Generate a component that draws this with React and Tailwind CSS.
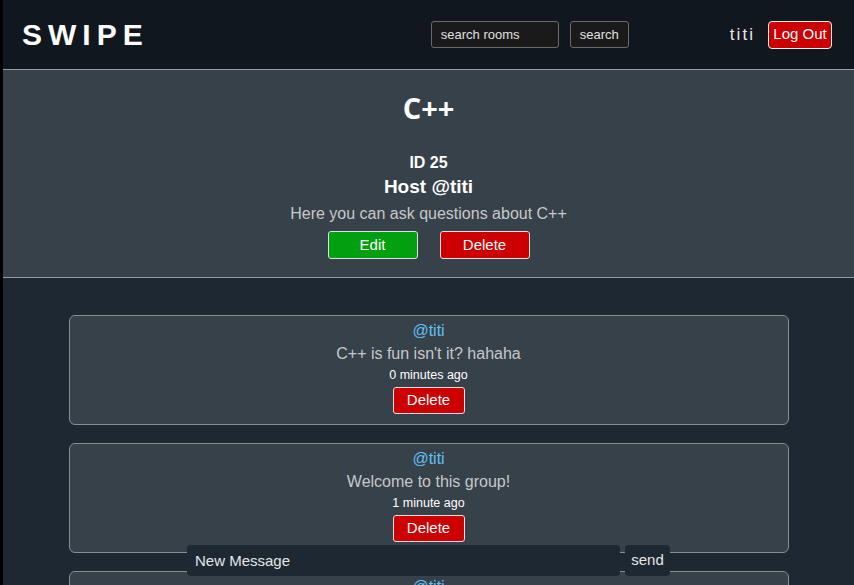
const messages = [
  { user: "titi", text: "C++ is fun isn't it? hahaha", time: "0 minutes ago" },
  { user: "titi", text: "Welcome to this group!", time: "1 minute ago" },
  { user: "titi", text: "Hello everyone", time: "2 minutes ago" },
];

const Header = () => {
  return (
    <div className="flex items-center h-[69px] pl-[19px] pr-[22px] bg-[#10171e] border-b border-[#9a9a9a] box-content">
      <div className="text-white font-bold text-[30px] tracking-[0.2em] leading-none">SWIPE</div>
      <div className="flex items-center ml-auto mr-[-1px]">
        <input
          placeholder="search rooms"
          className="w-[128px] h-[27px] px-[9px] bg-[#1a1a1a] border border-[#6a6a6a] rounded-[3px] text-[13px] text-[#e0e0e0] placeholder:text-[#e0e0e0] outline-none"
        />
        <button className="ml-[11px] w-[59px] h-[27px] bg-[#1a1a1a] border border-[#6a6a6a] rounded-[3px] text-[13px] text-[#e0e0e0]">
          search
        </button>
      </div>
      <div className="ml-[102px] text-[17px] tracking-[0.12em] text-[#e6e6e6]">titi</div>
      <button className="ml-[13px] w-[64px] h-[28px] bg-[#cc0000] border border-[#f0f0f0] rounded-[4px] text-[15px] text-white">
        Log Out
      </button>
    </div>
  );
};

const RoomInfo = () => {
  return (
    <div className="flex flex-col items-center bg-[#36414a] border-b border-[#9a9a9a] pt-[18px] pb-[18px]">
      <h1 className="text-white font-bold text-[29px] leading-[40px] font-['Open_Sans',sans-serif]">C++</h1>
      <div className="mt-[25px] text-white font-bold text-[16px] leading-[20px]">ID 25</div>
      <div className="mt-[2px] text-white font-bold text-[19px] leading-[24px]">Host @titi</div>
      <div className="mt-[4px] text-[#c8c8c8] text-[16px] leading-[22px]">Here you can ask questions about C++</div>
      <div className="flex gap-[22px] mt-[6px]">
        <button className="w-[90px] h-[28px] bg-[#00a010] border border-[#e0e0e0] rounded-[3px] text-white text-[15px]">Edit</button>
        <button className="w-[90px] h-[28px] bg-[#cc0000] border border-[#e0e0e0] rounded-[3px] text-white text-[15px]">Delete</button>
      </div>
    </div>
  );
};

const MessageCard = ({ msg }) => {
  return (
    <div className="w-[720px] h-[110px] flex flex-col items-center pt-[4px] bg-[#36414a] border border-[#8c8c8c] rounded-[6px]">
      <div className="text-[#5ec2f2] text-[16px] leading-[22px]">@{msg.user}</div>
      <div className="text-[#c8c8c8] text-[16px] leading-[23px]">{msg.text}</div>
      <div className="text-white text-[12.5px] leading-[20px]">{msg.time}</div>
      <button className="mt-[2px] w-[72px] h-[27px] bg-[#cc0000] border border-[#e0e0e0] rounded-[3px] text-white text-[15px]">
        Delete
      </button>
    </div>
  );
};

export default function App() {
  return (
    <div className="flex min-h-screen bg-black font-['Liberation_Sans',Arial,sans-serif]">
      <div className="w-[3px] shrink-0 bg-black" />
      <div className="flex-1 flex flex-col bg-[#1e2833]">
        <Header />
        <RoomInfo />
        <div className="flex flex-col items-center gap-[18px] pt-[37px] pb-[60px]">
          {messages.map((m, i) => (
            <MessageCard key={i} msg={m} />
          ))}
        </div>
      </div>
      <div className="fixed bottom-[9px] left-[187px] flex gap-[5px]">
        <input
          placeholder="New Message"
          className="w-[433px] h-[31px] px-[8px] bg-[#1e2833] rounded-[4px] text-[15px] text-[#e6e6e6] placeholder:text-[#e6e6e6] outline-none"
        />
        <button className="w-[45px] h-[31px] bg-[#1e2833] rounded-[4px] text-[15px] text-[#e6e6e6]">send</button>
      </div>
    </div>
  );
}
